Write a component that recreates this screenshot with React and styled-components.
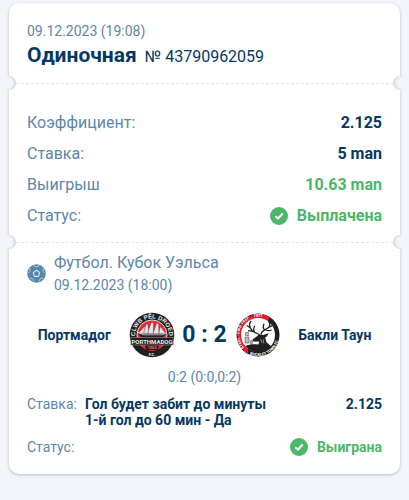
import styled, { createGlobalStyle } from 'styled-components';

const GlobalStyle = createGlobalStyle`
    * {
        box-sizing: border-box;
    }

    body {
        margin: 0;
        background-color: #f4f5fa;
        color: #053862;
        font-family: Roboto, "Liberation Sans", sans-serif;
    }
`;

const Page = styled.main`
    padding: 3px 9px 24px;
`;

const Ticket = styled.article`
    background-color: #ffffff;
    border-radius: 10px;
    box-shadow: 0 1px 3px rgba(40, 50, 80, 0.3);
`;

const TicketHeader = styled.header`
    padding: 18px 18px 12px;
`;

const DateText = styled.time`
    display: block;
    color: #5c87a8;
    font-size: 14px;
    line-height: 20px;
`;

const TitleRow = styled.div`
    display: flex;
    align-items: baseline;
    gap: 8px;
    line-height: 28px;
`;

const Title = styled.h1`
    margin: 0;
    font-size: 21px;
    font-weight: 700;
`;

const TicketNumber = styled.span`
    font-size: 16px;
`;

const TearLine = styled.div`
    position: relative;
    height: 1px;
    margin: 0 7px;
    background: repeating-linear-gradient(90deg, #e4e5ec 0 3px, transparent 3px 5px);

    &::before,
    &::after {
        content: '';
        position: absolute;
        top: -7px;
        width: 10px;
        height: 14px;
        background-color: #f4f5fa;
    }

    &::before {
        left: -10px;
        border-radius: 0 7px 7px 0;
        box-shadow: inset -2px 0 2px rgba(40, 50, 80, 0.15);
    }

    &::after {
        right: -10px;
        border-radius: 7px 0 0 7px;
        box-shadow: inset 2px 0 2px rgba(40, 50, 80, 0.15);
    }
`;

const Summary = styled.dl`
    margin: 0;
    padding: 23px 18px 11px;
`;

const SummaryRow = styled.div`
    display: flex;
    justify-content: space-between;
    align-items: center;
    font-size: 16px;
    line-height: 31px;

    dt {
        color: #5c87a8;
    }

    dd {
        display: flex;
        align-items: center;
        gap: 9px;
        margin: 0;
        font-weight: 700;
        color: ${({ $won }) => ($won ? '#4bb768' : 'inherit')};
    }
`;

const EventSection = styled.section`
    padding: 8px 18px 18px;
`;

const EventHeader = styled.div`
    display: flex;
    align-items: center;
    gap: 8px;
`;

const League = styled.h2`
    margin: 0;
    color: #5c87a8;
    font-size: 16px;
    font-weight: 400;
    line-height: 24px;
`;

const Match = styled.div`
    display: grid;
    grid-template-columns: 1fr 48px 46px 48px 1fr;
    align-items: center;
    column-gap: 6px;
    margin-top: 16px;
`;

const Team = styled.span`
    font-size: 14px;
    font-weight: 700;
    text-align: center;
`;

const Score = styled.strong`
    font-size: 23px;
    font-weight: 700;
    line-height: 28px;
    text-align: center;
    white-space: nowrap;
`;

const Periods = styled.p`
    margin: 10px 0 11px;
    color: #5c87a8;
    font-size: 14px;
    line-height: 16px;
    text-align: center;
`;

const BetRow = styled.div`
    display: flex;
    align-items: flex-start;
    font-size: 14px;
    line-height: 16px;
`;

const BetLabel = styled.span`
    width: 58px;
    color: #5c87a8;
`;

const BetText = styled.p`
    flex: 1;
    margin: 0;
    font-weight: 700;
`;

const StatusRow = styled(BetRow)`
    align-items: center;
    justify-content: space-between;
    margin-top: 10px;
`;

const StatusValue = styled.span`
    display: flex;
    align-items: center;
    gap: 9px;
    color: #4bb768;
    font-weight: 700;
`;

const CheckIcon = () => (
    <svg width="18" height="18" viewBox="0 0 18 18" aria-hidden="true">
        <circle cx="9" cy="9" r="9" fill="#4bb768" />
        <path d="M5.3 9.2 8 11.5l4.7-5" fill="none" stroke="#fff" strokeWidth="2" />
    </svg>
);

const BallIcon = () => (
    <svg width="19" height="19" viewBox="0 0 19 19" aria-hidden="true">
        <circle cx="9.5" cy="9.5" r="9.3" fill="#5585a8" />
        <path d="M9.5 6.3 12.7 8.6 11.5 12.4H7.5L6.3 8.6Z" fill="none" stroke="#d9e5ee" strokeWidth="1.1" />
        <path
            d="M6.3 1.6 9.5 2.9l3.2-1.3M16 4.3l.2 3.2 2.2 2.3M16.2 14l-3 .7-1.4 2.8M7.2 17.5l-1.4-2.8-3-.7M.6 9.8l2.2-2.3.2-3.2"
            fill="none"
            stroke="#b4cbdb"
            strokeWidth="1"
        />
    </svg>
);

const PorthmadogLogo = () => (
    <svg width="48" height="48" viewBox="0 0 48 48" role="img" aria-label="Портмадог">
        <defs>
            <path id="porthmadogArc" d="M7.5 28.5A17 17 0 1 1 40.5 28.5" />
        </defs>
        <circle cx="24" cy="24" r="22.3" fill="#211f22" />
        <circle cx="24" cy="24" r="15" fill="#e12b32" stroke="#ddd" strokeWidth="1" />
        <text fill="#e8e8e8" fontFamily="Liberation Sans" fontSize="6" fontWeight="700">
            <textPath href="#porthmadogArc" startOffset="50%" textAnchor="middle">CLWB PÊL DROED</textPath>
        </text>
        <path d="M10 22.5h28l-3.4 4.5H13.8Z" fill="#211f22" />
        <path
            d="M17 15 10.3 22.5l6.4.4ZM18.5 12.8l-4 10h6.3l-.9-8.8ZM23.5 11.3l-4.3 11.5h6l.3-10.8ZM28.8 12l-3.8 10.8h6l-.5-10ZM32.3 15.5l-1.6 7.3h7.3Z"
            fill="#e6e6e6"
            stroke="#6a4a4c"
            strokeWidth=".4"
        />
        <path d="M8.5 20.5l6.5 3.3h19l3.5-1.3" fill="none" stroke="#eee" strokeWidth=".7" />
        <path d="M2.8 26.5h42.4v7.5H2.8Z" fill="#211f22" stroke="#aaa" strokeWidth=".5" />
        <text x="24" y="32.5" fill="#e8e8e8" fontSize="6" fontWeight="700" textAnchor="middle">PORTHMADOG</text>
        <path d="M12.5 34.5h23a15 15 0 0 1-23 0Z" fill="#e12b32" />
        <path d="M17 34.5h14l-1 4.5H18Z" fill="#211f22" />
        <text x="24" y="38" fill="#f0555b" fontSize="4" fontWeight="700" textAnchor="middle">1884</text>
        <text x="24" y="44.5" fill="#e8e8e8" fontSize="4" fontWeight="700" textAnchor="middle">F.C.</text>
    </svg>
);

const BuckleyLogo = () => (
    <svg width="48" height="48" viewBox="0 0 48 48" role="img" aria-label="Бакли Таун">
        <defs>
            <path id="buckleyTop" d="M11.8 38A18.4 18.4 0 0 1 20 6" />
            <path id="buckleyBottom" d="M14 42.5A21 21 0 0 0 44.8 21" />
        </defs>
        <circle cx="24" cy="24" r="21.5" fill="#211f20" />
        <path d="M14 43A21.5 21.5 0 1 1 36 6L32.5 12 14 37Z" fill="#e5192d" />
        <circle cx="24" cy="24" r="17" fill="#fff" />
        <text fill="#fff" fontSize="4" fontWeight="700">
            <textPath href="#buckleyTop" startOffset="2">STEEL · CWB TREF</textPath>
        </text>
        <text x="24" y="6.3" fill="#fff" fontSize="4" fontWeight="700" textAnchor="middle">1977</text>
        <text fill="#fff" fontSize="4" fontWeight="700">
            <textPath href="#buckleyBottom" startOffset="2">BUCKLEY TOWN FC</textPath>
        </text>
        <path
            d="M25.5 23.5C20 21.8 15.5 18.5 15.5 13.5c0-1.5.6-2.4 1.7-3.4M16.5 17l-3.6-2.5M19 20.4l-5-.8M20.3 20.7c-1-2-.7-4 .4-5.8M27 23.5c.5-4 4-4.5 7-6.5 2.5-1.7 2.2-4.6.5-7M34.2 16.7l4-2.2M30.4 18.9c-1.6-2-1.5-4-.3-6.2M31.5 18.7c2 1.2 4 1.3 6.2.3"
            fill="none"
            stroke="#211f20"
            strokeWidth="1.3"
        />
        <path
            d="m18.5 28.5 4.2-3.1 2.3-2.2 4.3.9 5.5-2-2 3.4-1.7 1 1.4 4.8 5.2 4.5A17 17 0 0 1 11.4 35c3.3-1.8 8.3-2.2 13-1.4l.9-3.1-6 .1Z"
            fill="#211f20"
        />
        <path d="m26.5 28 1.5 4M29.2 28.5l.7 4" stroke="#fff" strokeWidth=".5" />
        <path d="M11.5 21.5h3v3h-3ZM11 26h4v6h-4ZM16.4 29.5h2v3h-2Z" fill="#bbb" stroke="#555" strokeWidth=".6" />
    </svg>
);

const App = () => {

    return (
        <>
            <GlobalStyle />
            <Page>
                <Ticket>
                    <TicketHeader>
                        <DateText dateTime="2023-12-09T19:08">09.12.2023 (19:08)</DateText>
                        <TitleRow>
                            <Title>Одиночная</Title>
                            <TicketNumber>№ 43790962059</TicketNumber>
                        </TitleRow>
                    </TicketHeader>
                    <TearLine />
                    <Summary>
                        <SummaryRow><dt>Коэффициент:</dt><dd>2.125</dd></SummaryRow>
                        <SummaryRow><dt>Ставка:</dt><dd>5 man</dd></SummaryRow>
                        <SummaryRow $won><dt>Выигрыш</dt><dd>10.63 man</dd></SummaryRow>
                        <SummaryRow $won><dt>Статус:</dt><dd><CheckIcon />Выплачена</dd></SummaryRow>
                    </Summary>
                    <TearLine />
                    <EventSection>
                        <EventHeader>
                            <BallIcon />
                            <div>
                                <League>Футбол. Кубок Уэльса</League>
                                <DateText dateTime="2023-12-09T18:00">09.12.2023 (18:00)</DateText>
                            </div>
                        </EventHeader>
                        <Match>
                            <Team>Портмадог</Team>
                            <PorthmadogLogo />
                            <Score>0 : 2</Score>
                            <BuckleyLogo />
                            <Team>Бакли Таун</Team>
                        </Match>
                        <Periods>0:2 (0:0,0:2)</Periods>
                        <BetRow>
                            <BetLabel>Ставка:</BetLabel>
                            <BetText>Гол будет забит до минуты<br />1-й гол до 60 мин - Да</BetText>
                            <strong>2.125</strong>
                        </BetRow>
                        <StatusRow>
                            <BetLabel>Статус:</BetLabel>
                            <StatusValue><CheckIcon />Выиграна</StatusValue>
                        </StatusRow>
                    </EventSection>
                </Ticket>
            </Page>
        </>
    );
}

export default App;
